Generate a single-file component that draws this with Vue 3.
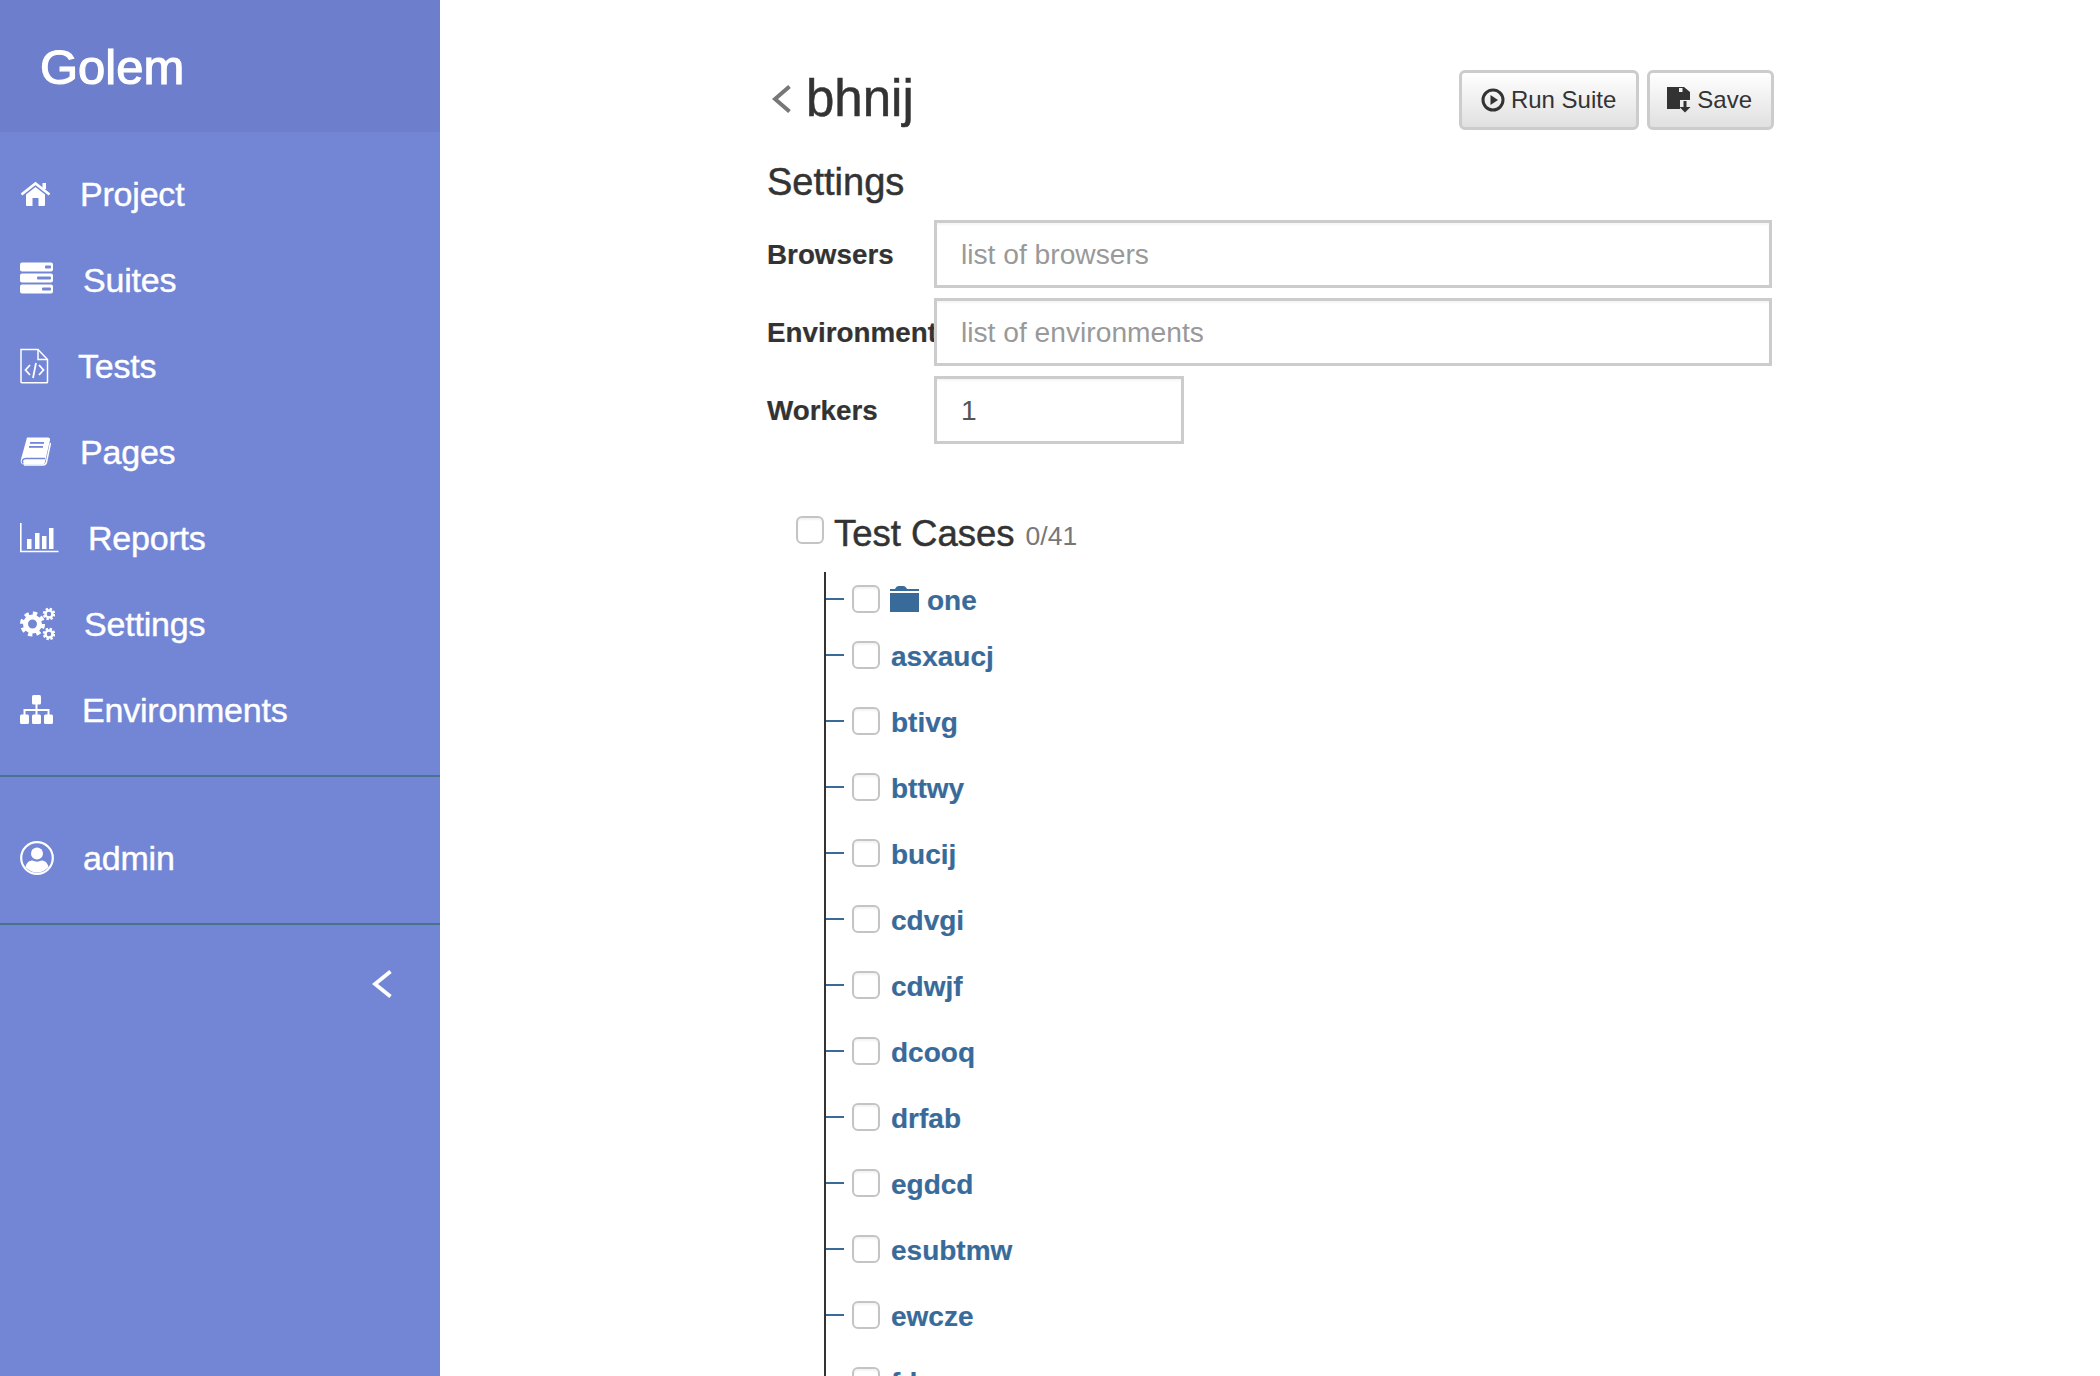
<script setup>
import { ref } from 'vue'

const nav = [
    { label: 'Project', icon: 'home', w: 31 },
    { label: 'Suites', icon: 'server', w: 34 },
    { label: 'Tests', icon: 'file', w: 29 },
    { label: 'Pages', icon: 'book', w: 31 },
    { label: 'Reports', icon: 'chart', w: 39 },
    { label: 'Settings', icon: 'cogs', w: 35 },
    { label: 'Environments', icon: 'sitemap', w: 33 },
]

const tests = ['asxaucj', 'btivg', 'bttwy', 'bucij', 'cdvgi', 'cdwjf', 'dcooq', 'drfab', 'egdcd', 'esubtmw', 'ewcze', 'fdx']

const workers = ref('1')
</script>

<template>
    <div class="page">
        <aside class="sidebar">
            <div class="brand">Golem</div>

            <ul class="nav">
                <li v-for="item in nav" :key="item.label" class="nav-item">
                    <svg class="nav-icon" :width="item.w" height="36" :viewBox="`0 0 ${item.w} 36`" fill="#fff" aria-hidden="true">
                        <g v-if="item.icon === 'home'">
                            <path d="M6 18.500 15.500 11 25 18.500V29a1 1 0 0 1-1 1h-5.500v-8h-6v8H7a1 1 0 0 1-1-1z" />
                            <path d="M1.500 18.500 15.500 7.500 29.500 18.500" fill="none" stroke="#fff" stroke-width="2.600" />
                            <rect x="22.500" y="7" width="3.500" height="6" />
                        </g>
                        <g v-else-if="item.icon === 'server'">
                            <rect x="0" y="0.500" width="33" height="9" rx="2" />
                            <rect x="0" y="11.500" width="33" height="9" rx="2" />
                            <rect x="0" y="22.500" width="33" height="9" rx="2" />
                            <rect x="25" y="3.500" width="6" height="3" rx="1" fill="#7386d5" />
                            <rect x="17" y="14.500" width="14" height="3" rx="1" fill="#7386d5" />
                            <rect x="22" y="25.500" width="9" height="3" rx="1" fill="#7386d5" />
                        </g>
                        <g v-else-if="item.icon === 'file'" fill="none" stroke="#fff" stroke-width="1.500">
                            <path d="M1 1.500h17l9.500 10V34a.8.800 0 0 1-.800.800H1.800A.8.800 0 0 1 1 34z" />
                            <path d="M18 1.500v10h9.500" />
                            <path d="M10 17l-4.500 5 4.500 5M19 17l4.500 5-4.500 5M16 15l-3 15" stroke-width="1.800" />
                        </g>
                        <g v-else-if="item.icon === 'book'">
                            <path d="M7 3.500h21a2 2 0 0 1 2 2.500l-5 22a3 3 0 0 1-3 2.500H4.500c-3 0-4-2-3.700-4.500z" />
                            <path d="M3 29.500c-1.500-3 0-5 3-5h19" fill="none" stroke="#7386d5" stroke-width="1.500" />
                            <path d="M4 31h19c2 0 3-1 3.500-3l4-19" fill="none" stroke="#fff" stroke-width="1.500" />
                            <rect x="10" y="8" width="14" height="1.800" fill="#7386d5" />
                            <rect x="9" y="12" width="14" height="1.800" fill="#7386d5" />
                        </g>
                        <g v-else-if="item.icon === 'chart'">
                            <path d="M.8 3v28.500H38.500" fill="none" stroke="#fff" stroke-width="1.600" />
                            <rect x="7" y="19" width="4.500" height="10" />
                            <rect x="15" y="13" width="4.500" height="16" />
                            <rect x="22" y="16" width="4.500" height="13" />
                            <rect x="29" y="8" width="4.500" height="21" />
                        </g>
                        <g v-else-if="item.icon === 'cogs'">
                            <circle cx="12.500" cy="18" r="7" fill="none" stroke="#fff" stroke-width="5" />
                            <circle cx="12.500" cy="18" r="10.500" fill="none" stroke="#fff" stroke-width="4" stroke-dasharray="4.300 3.950" />
                            <circle cx="29" cy="8" r="3.500" fill="none" stroke="#fff" stroke-width="2.500" />
                            <circle cx="29" cy="8" r="5" fill="none" stroke="#fff" stroke-width="2.500" stroke-dasharray="2.300 1.630" />
                            <circle cx="29" cy="28" r="3.500" fill="none" stroke="#fff" stroke-width="2.500" />
                            <circle cx="29" cy="28" r="5" fill="none" stroke="#fff" stroke-width="2.500" stroke-dasharray="2.300 1.630" />
                        </g>
                        <g v-else>
                            <rect x="12" y="3" width="9" height="9.500" rx="1.500" />
                            <rect x="0" y="22.500" width="9" height="9.500" rx="1.500" />
                            <rect x="12" y="22.500" width="9" height="9.500" rx="1.500" />
                            <rect x="24" y="22.500" width="9" height="9.500" rx="1.500" />
                            <path d="M16.500 12v11M4.500 24v-6h24v6" fill="none" stroke="#fff" stroke-width="2" />
                        </g>
                    </svg>
                    <span>{{ item.label }}</span>
                </li>
            </ul>

            <div class="user">
                <div class="nav-item">
                    <svg class="nav-icon" width="34" height="36" viewBox="0 0 34 36" fill="#fff" aria-hidden="true">
                        <circle cx="17" cy="18" r="15.800" fill="none" stroke="#fff" stroke-width="2.200" />
                        <circle cx="17" cy="13.500" r="6" />
                        <path d="M5.500 27c1-4.500 4-6.500 7-6.500 3 1.500 6 1.500 9 0 3 0 6 2 7 6.500-3 3.500-7 5.500-11.500 5.500S8.500 30.500 5.500 27z" />
                    </svg>
                    <span>admin</span>
                </div>
            </div>

            <div class="collapse">
                <svg width="20" height="28" viewBox="0 0 20 28" fill="none" stroke="#fff" stroke-width="3.800" aria-hidden="true">
                    <path d="M18.500 1.500 3 14l15.500 12.500" />
                </svg>
            </div>
        </aside>

        <main class="main">
            <div class="title-row">
                <div class="title">
                    <svg width="19" height="28" viewBox="0 0 19 28" fill="none" stroke="#777" stroke-width="4" aria-hidden="true">
                        <path d="M17.500 1.500 3 14l14.500 12.500" />
                    </svg>
                    <h1>bhnij</h1>
                </div>
                <div class="actions">
                    <button class="btn">
                        <svg width="24" height="24" viewBox="0 0 24 24" aria-hidden="true">
                            <circle cx="12" cy="12" r="10" fill="none" stroke="#333" stroke-width="3" />
                            <path d="M9.500 7 17 12l-7.500 5z" fill="#333" />
                        </svg>
                        Run Suite
                    </button>
                    <button class="btn">
                        <svg width="24" height="26" viewBox="0 0 24 26" fill="#333" aria-hidden="true">
                            <path d="M0 0H17L23 5V13H13V22H0z" />
                            <rect x="12" y="1" width="3.500" height="4" fill="#f4f4f4" />
                            <path d="M16.500 14h3v6H23.500L18 25.500 12.500 20h4z" />
                        </svg>
                        Save
                    </button>
                </div>
            </div>

            <h2 class="section-title">Settings</h2>

            <div class="form">
                <label class="field">
                    <span class="field-label">Browsers</span>
                    <input class="input" type="text" placeholder="list of browsers" />
                </label>
                <label class="field">
                    <span class="field-label">Environment</span>
                    <input class="input" type="text" placeholder="list of environments" />
                </label>
                <label class="field">
                    <span class="field-label">Workers</span>
                    <input v-model="workers" class="input input-small" type="text" />
                </label>
            </div>

            <div class="tests">
                <div class="tests-head">
                    <input class="check" type="checkbox" />
                    <h3>Test Cases</h3>
                    <span class="count">0/41</span>
                </div>

                <ul class="tree">
                    <li class="tree-row tree-folder">
                        <span class="tick"></span>
                        <input class="check" type="checkbox" />
                        <svg class="folder" width="29" height="26" viewBox="0 0 29 26" aria-hidden="true">
                            <path d="M0 7h29v19H0z" />
                            <path d="M0 5V3h5c1-2 2-3 4-3h4c2 0 3 1 4 3h12v2z" />
                        </svg>
                        <a class="tree-link">one</a>
                    </li>
                    <li v-for="name in tests" :key="name" class="tree-row">
                        <span class="tick"></span>
                        <input class="check" type="checkbox" />
                        <a class="tree-link">{{ name }}</a>
                    </li>
                </ul>
            </div>
        </main>
    </div>
</template>

<style>
html,
body {
    margin: 0;
    height: 100%;
    overflow: hidden;
    background: #fff;
}
</style>

<style scoped>
.page {
    display: flex;
    height: 1376px;
    overflow: hidden;
    font-family: "Liberation Sans", Arial, sans-serif;
    color: #333;
}

.sidebar {
    flex: 0 0 440px;
    background: #7386d5;
    color: #fff;
}
.brand {
    height: 132px;
    box-sizing: border-box;
    padding: 38px 0 0 40px;
    background: #6d7fcc;
    font-size: 49px;
    font-weight: 400;
    line-height: 58px;
    -webkit-text-stroke: 1.2px #fff;
}
.nav {
    list-style: none;
    margin: 0;
    padding: 19px 0 22px;
    border-bottom: 2px solid #47748b;
}
.nav-item {
    display: flex;
    align-items: center;
    gap: 29px;
    height: 86px;
    padding-left: 20px;
    font-size: 34px;
    letter-spacing: -0.2px;
    -webkit-text-stroke: 0.4px #fff;
}
.nav-icon {
    flex-shrink: 0;
}
.user {
    padding: 38px 0 22px;
    border-bottom: 2px solid #47748b;
}
.collapse {
    display: flex;
    justify-content: flex-end;
    padding: 45px 48px 0 0;
}

.main {
    flex: 1;
    padding: 70px 326px 0 327px;
}
.title-row {
    display: flex;
    align-items: center;
    justify-content: space-between;
    height: 60px;
}
.title {
    display: flex;
    align-items: center;
    gap: 15px;
    padding-left: 5px;
}
.title svg {
    margin-top: -2px;
}
.title h1 {
    margin: -2px 0 0;
    font-size: 51px;
    font-weight: 400;
    line-height: 60px;
    -webkit-text-stroke: 0.5px #333;
}
.actions {
    display: flex;
    gap: 8px;
}
.btn {
    display: flex;
    align-items: center;
    gap: 6px;
    height: 60px;
    padding: 0 20px 0 19px;
    background: linear-gradient(to bottom, #fff, #e0e0e0);
    border: 3px solid #ccc;
    border-radius: 6px;
    font-family: inherit;
    font-size: 24px;
    color: #333;
}
.btn + .btn {
    padding: 0 19px 0 17px;
}

.section-title {
    margin: 30px 0 16px;
    font-size: 38px;
    font-weight: 400;
    line-height: 44px;
    -webkit-text-stroke: 0.5px #333;
}

.form {
    display: flex;
    flex-direction: column;
    gap: 10px;
}
.field {
    display: flex;
    align-items: center;
}
.field-label {
    flex: 0 0 167px;
    min-width: 0;
    padding-top: 2px;
    white-space: nowrap;
    font-size: 27.800px;
    font-weight: 700;
    -webkit-text-stroke: 0.2px #333;
}
.input {
    width: 838px;
    height: 68px;
    box-sizing: border-box;
    padding: 0 24px;
    border: 3px solid #ccc;
    background: #fff;
    box-shadow: inset 0 2px 2px rgba(0, 0, 0, 0.04);
    font-family: inherit;
    font-size: 28.200px;
    color: #555;
    outline: none;
}
.input::placeholder {
    color: #999;
    opacity: 1;
}
.input-small {
    width: 250px;
}

.tests {
    padding: 64px 0 0 29px;
}
.tests-head {
    display: flex;
    align-items: center;
    height: 52px;
}
.tests-head h3 {
    margin: 0 11px 0 10px;
    font-size: 36.500px;
    font-weight: 400;
    -webkit-text-stroke: 0.5px #333;
}
.count {
    padding-top: 5px;
    font-size: 26.500px;
    color: #777;
}
.check {
    appearance: none;
    flex-shrink: 0;
    width: 28px;
    height: 28px;
    margin: 0;
    box-sizing: border-box;
    background: #fff;
    border: 2px solid #c4c4c4;
    border-radius: 6px;
    box-shadow: inset 0 2px 2px rgba(0, 0, 0, 0.05);
}
.tests-head .check {
    margin-bottom: 8px;
}

.tree {
    list-style: none;
    margin: 12px 0 0 28px;
    padding: 4px 0 0;
    border-left: 2px solid #333;
}
.tree-row {
    display: flex;
    align-items: center;
    height: 66px;
}
.tree-folder {
    height: 46px;
}
.tick {
    flex-shrink: 0;
    width: 18px;
    height: 2px;
    margin-right: 8px;
    background: #386a9a;
}
.folder {
    margin-left: 10px;
    fill: #386a9a;
}
.tree-link {
    margin-left: 11px;
    padding-top: 3px;
    font-size: 28px;
    font-weight: 700;
    color: #386a9a;
    -webkit-text-stroke: 0.2px #386a9a;
}
.folder + .tree-link {
    margin-left: 8px;
}
</style>
